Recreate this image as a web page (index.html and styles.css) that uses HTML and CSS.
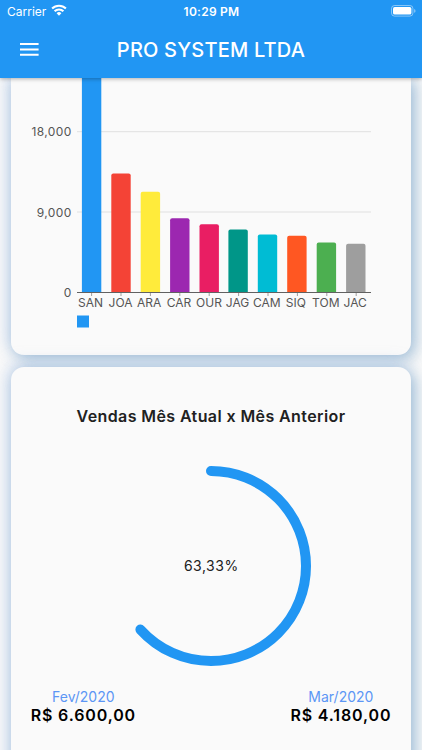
FILE: index.html
```html
<!DOCTYPE html>
<html lang="pt-BR">
<head>
  <meta charset="UTF-8">
  <meta name="viewport" content="width=device-width, initial-scale=1.0">
  <title>PRO SYSTEM LTDA</title>
  <link rel="stylesheet" href="styles.css">
</head>
<body>
  <header class="topo">
    <!-- Barra de status -->
    <div class="status">
      <div class="operadora">
        <span>Carrier</span>
        <svg class="wifi" viewBox="0 0 16 12" width="16" height="12">
          <g fill="none" stroke="#fff" stroke-width="2.1">
            <path d="M1.1 4.6a9.8 9.8 0 0 1 13.8 0"/>
            <path d="M3.6 7.3a6.2 6.2 0 0 1 8.8 0"/>
          </g>
          <path d="M8 11.7 5.6 9.3a3.4 3.4 0 0 1 4.8 0z" fill="#fff"/>
        </svg>
      </div>
      <span class="hora">10:29 PM</span>
      <svg class="bateria" viewBox="0 0 25 12" width="25" height="12">
        <rect x="0.5" y="0.5" width="21.4" height="10.6" rx="3" fill="none" stroke="#fff" stroke-opacity="0.45"/>
        <rect x="2" y="2" width="18.4" height="7.6" rx="1.7" fill="#fff"/>
        <path d="M23.2 4v3.8q1.3-.6 1.3-1.9T23.2 4z" fill="#fff" fill-opacity="0.5"/>
      </svg>
    </div>
    <!-- Barra do app -->
    <div class="barra">
      <svg class="menu" viewBox="0 0 19 13" width="19" height="13">
        <path d="M0 1.1h18.6M0 6.4h18.6M0 11.7h18.6" stroke="#fff" stroke-width="2"/>
      </svg>
      <h1>PRO SYSTEM LTDA</h1>
    </div>
  </header>

  <main class="conteudo">
    <!-- Grafico de barras -->
    <section class="card card-barras">
      <svg class="grafico" viewBox="0.5 0 401 277" width="401" height="277">
        <g class="linhas">
          <path d="M66.5 53.7h294M66.5 134h294"/>
        </g>
        <g class="valores">
          <text x="61.2" y="58.3">18,000</text>
          <text x="61.2" y="138.6">9,000</text>
          <text x="61.2" y="219.3">0</text>
        </g>
        <g class="barras">
          <path d="M71.4 0h19.4v214.5h-19.4z" fill="#2196f3"/>
          <path d="M100.8 214.5v-117q0-2 2-2h15.4q2 0 2 2v117z" fill="#f44336"/>
          <path d="M130.2 214.5v-98.7q0-2 2-2h15.4q2 0 2 2v98.7z" fill="#ffeb3b"/>
          <path d="M159.6 214.5v-72.3q0-2 2-2h15.4q2 0 2 2v72.3z" fill="#9c27b0"/>
          <path d="M189 214.5v-66.3q0-2 2-2h15.4q2 0 2 2v66.3z" fill="#e91e63"/>
          <path d="M217.9 214.5v-61q0-2 2-2h15.4q2 0 2 2v61z" fill="#009688"/>
          <path d="M247.3 214.5v-56q0-2 2-2h15.4q2 0 2 2v56z" fill="#00bcd4"/>
          <path d="M276.7 214.5v-54.8q0-2 2-2h15.4q2 0 2 2v54.8z" fill="#ff5722"/>
          <path d="M306.2 214.5v-47.9q0-2 2-2h15.4q2 0 2 2v47.9z" fill="#4caf50"/>
          <path d="M335.6 214.5v-46.7q0-2 2-2h15.4q2 0 2 2v46.7z" fill="#9e9e9e"/>
        </g>
        <path class="eixo" d="M66.5 214.5h294"/>
        <path class="marcas" d="M81.1 215v3M110.5 215v3M139.9 215v3M169.3 215v3M198.7 215v3M228.1 215v3M257.5 215v3M286.9 215v3M316.3 215v3M345.7 215v3"/>
        <g class="nomes">
          <text x="80" y="229">SAN</text>
          <text x="110" y="229">JOA</text>
          <text x="138.6" y="229">ARA</text>
          <text x="168.4" y="229">CAR</text>
          <text x="198.5" y="229">OUR</text>
          <text x="227" y="229">JAG</text>
          <text x="256.3" y="229">CAM</text>
          <text x="285.3" y="229">SIQ</text>
          <text x="315.3" y="229">TOM</text>
          <text x="344.7" y="229">JAC</text>
        </g>
        <rect x="66.5" y="237.5" width="12" height="12" fill="#2196f3"/>
      </svg>
    </section>

    <!-- Comparativo entre os meses -->
    <section class="card card-meses">
      <h2>Vendas Mês Atual x Mês Anterior</h2>
      <svg class="circulo" viewBox="0 0 200 200" width="200" height="200">
        <circle cx="100" cy="100" r="95" pathLength="100" transform="rotate(-90 100 100)"/>
        <text x="100.3" y="105.4">63,33%</text>
      </svg>
      <div class="meses">
        <div class="mes">
          <span class="nome-mes">Fev/2020</span>
          <strong>R$ 6.600,00</strong>
        </div>
        <div class="mes">
          <span class="nome-mes">Mar/2020</span>
          <strong>R$ 4.180,00</strong>
        </div>
      </div>
    </section>
  </main>
</body>
</html>
```

FILE: styles.css
```css
* {
  box-sizing: border-box;
}
body {
  margin: 0;
  height: 750px;
  overflow: hidden;
  font-family: Inter, Roboto, sans-serif;
  background-color: #fafafa;
  display: flex;
  flex-direction: column;
}
.topo {
  position: relative;
  z-index: 1;
  flex: none;
  height: 77.7px;
  background-color: #2196f3;
  color: white;
  box-shadow: 0 1px 4px rgba(0, 0, 0, 0.3);
}
.status {
  display: grid;
  grid-template-columns: 1fr auto 1fr;
  align-items: center;
  height: 22px;
  padding: 0 6px 0 7px;
  font-size: 12px;
}
.operadora {
  display: flex;
  align-items: center;
  gap: 5px;
}
.wifi {
  margin-top: -2px;
}
.hora {
  font-weight: 600;
  letter-spacing: 0.25px;
}
.bateria {
  justify-self: end;
  margin-top: -1px;
}
.barra {
  display: grid;
  grid-template-columns: 19px 1fr 19px;
  align-items: center;
  height: 54px;
  padding: 0 20px;
}
h1 {
  margin: 0;
  padding-top: 1px;
  text-align: center;
  font-size: 20px;
  font-weight: 500;
  letter-spacing: 0.2px;
}
.conteudo {
  flex: 1;
  display: flex;
  flex-direction: column;
  gap: 12px;
  padding: 0 10.7px;
}
.card {
  flex: none;
  background-color: #fafafa;
  border-radius: 13px;
  box-shadow: 4px 4px 15px 1px rgba(70, 130, 180, 0.45), -4px -4px 15px rgba(180, 202, 235, 0.5);
}
.card-barras {
  height: 277.3px;
  border-radius: 0 0 13px 13px;
}
.grafico {
  display: block;
}
.linhas path {
  stroke: #e0e0e0;
}
.eixo {
  stroke: #616161;
  stroke-width: 1.2;
}
.marcas {
  stroke: #9e9e9e;
}
.valores text {
  text-anchor: end;
  font-size: 12px;
  letter-spacing: 0.4px;
  fill: #555;
}
.nomes text {
  text-anchor: middle;
  font-size: 12px;
  fill: #555;
}
.card-meses {
  height: 420px;
  padding: 39px 20px 0;
  display: flex;
  flex-direction: column;
  align-items: center;
}
h2 {
  margin: 0;
  font-size: 16px;
  line-height: 20px;
  font-weight: 600;
  letter-spacing: 0.4px;
  color: #212121;
}
.circulo {
  margin-top: 40px;
}
.circulo circle {
  fill: none;
  stroke: #2196f3;
  stroke-width: 10;
  stroke-linecap: round;
  stroke-dasharray: 63.33 100;
}
.circulo text {
  text-anchor: middle;
  font-size: 14px;
  font-weight: 400;
  letter-spacing: 0.5px;
  fill: #212121;
}
.meses {
  align-self: stretch;
  display: flex;
  justify-content: space-between;
  margin-top: 22px;
}
.mes {
  display: flex;
  flex-direction: column;
  align-items: center;
}
.nome-mes {
  font-size: 14px;
  line-height: 18px;
  color: #5c96f5;
}
.mes strong {
  font-size: 16px;
  line-height: 19px;
  font-weight: 600;
  letter-spacing: 0.85px;
  color: black;
}
```
